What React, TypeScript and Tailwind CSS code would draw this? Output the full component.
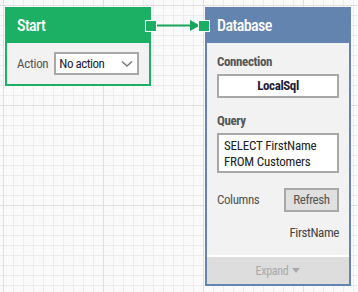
import React from 'react';

const font = "font-['Roboto_Condensed',Roboto,sans-serif]";

function GridBackground() {
  return (
    <svg className="absolute inset-0" width="358" height="292">
      <defs>
        <pattern id="minor" x="3" y="5" width="10" height="10" patternUnits="userSpaceOnUse">
          <rect x="0" y="0" width="1" height="10" fill="#ececec" />
          <rect x="0" y="0" width="10" height="1" fill="#ececec" />
        </pattern>
        <pattern id="major" x="3" y="5" width="100" height="100" patternUnits="userSpaceOnUse">
          <rect x="0" y="0" width="1" height="100" fill="#dfdfdf" />
          <rect x="0" y="0" width="100" height="1" fill="#dfdfdf" />
        </pattern>
      </defs>
      <rect width="358" height="292" fill="#fafafa" />
      <rect width="358" height="292" fill="url(#minor)" />
      <rect width="358" height="292" fill="url(#major)" />
    </svg>
  );
}

function Port({ className }: { className: string }) {
  return <div className={`absolute top-[11px] w-[12px] h-[12px] bg-[#1cae62] border border-white ${className}`} />;
}

function StartNode() {
  return (
    <div className="absolute left-[5px] top-[7px] w-[146px] border-2 border-[#1cb064]">
      <div className="h-[34px] bg-[#1cb064] px-[10px] flex items-center text-white text-[16px] font-medium tracking-[-0.6px]">Start</div>
      <div className="h-[41px] bg-[#f2f2f2] px-[10px] flex items-center gap-[6px]">
        <span className="text-[13px] text-[#555] tracking-[-0.3px]">Action</span>
        <div className="w-[85px] h-[23px] border-2 border-[#a8a8a8] bg-white flex items-center justify-between pl-[3px] pr-[4px]">
          <span className="text-[13px] text-[#1d1d35] tracking-[-0.5px]">No action</span>
          <svg width="12" height="8" viewBox="0 0 12 8">
            <path d="M1 1.5 L6 6 L11 1.5" fill="none" stroke="#7a7a7a" strokeWidth="1.6" />
          </svg>
        </div>
      </div>
      <Port className="right-[-8px]" />
    </div>
  );
}

function DatabaseNode() {
  return (
    <div className="absolute left-[205px] top-[7px] w-[146px] border-2 border-[#6484b0]">
      <div className="h-[34px] bg-[#6484b0] px-[10px] flex items-center text-white text-[16px] font-medium tracking-[-0.6px]">Database</div>
      <div className="h-[212px] bg-[#f2f2f2] px-[10px] pt-[11px] flex flex-col tracking-[-0.4px]">
        <div className="h-[16px] leading-[16px] text-[13px] font-bold text-[#555]">Connection</div>
        <div className="mt-[4px] h-[24px] border-2 border-[#a8a8a8] bg-white flex items-center justify-center text-[13px] font-bold text-[#1d1d35]">
          LocalSql
        </div>
        <div className="mt-[15px] h-[16px] leading-[16px] text-[13px] font-bold text-[#555]">Query</div>
        <div className="mt-[4px] h-[40px] border-2 border-[#a8a8a8] bg-white px-[5px] pt-[3px] text-[13px] leading-[16px] text-[#222] tracking-[-0.2px]">
          <div>SELECT FirstName</div>
          <div>FROM Customers</div>
        </div>
        <div className="mt-[15px] h-[24px] flex items-center justify-between">
          <span className="text-[13px] text-[#555]">Columns</span>
          <div className="w-[55px] h-[24px] border-2 border-[#a8a8a8] bg-[#e0e0e0] flex items-center justify-center text-[13px] text-[#555]">
            Refresh
          </div>
        </div>
        <div className="mt-[13px] h-[16px] leading-[16px] text-right text-[13px] text-[#444]">FirstName</div>
      </div>
      <div className="h-[29px] border-t-2 border-white bg-[#dddddd] flex items-center justify-center gap-[4px] text-[12px] text-[#a9a9a9] tracking-[-0.3px]">
        <span>Expand</span>
        <svg width="8" height="5" viewBox="0 0 8 5">
          <path d="M0 0 L8 0 L4 5 Z" fill="#a9a9a9" />
        </svg>
      </div>
      <Port className="left-[-9px]" />
    </div>
  );
}

function Connector() {
  return (
    <svg className="absolute left-[150px] top-[15px]" width="55" height="22" viewBox="0 0 55 22">
      <line x1="6" y1="10.5" x2="42" y2="10.5" stroke="#17a559" strokeWidth="2" />
      <path d="M40 5 L50 10.5 L40 16 Z" fill="#17a559" />
    </svg>
  );
}

export default function App() {
  return (
    <div className={`relative w-[358px] h-[292px] overflow-hidden ${font}`}>
      <GridBackground />
      <Connector />
      <StartNode />
      <DatabaseNode />
    </div>
  );
}
